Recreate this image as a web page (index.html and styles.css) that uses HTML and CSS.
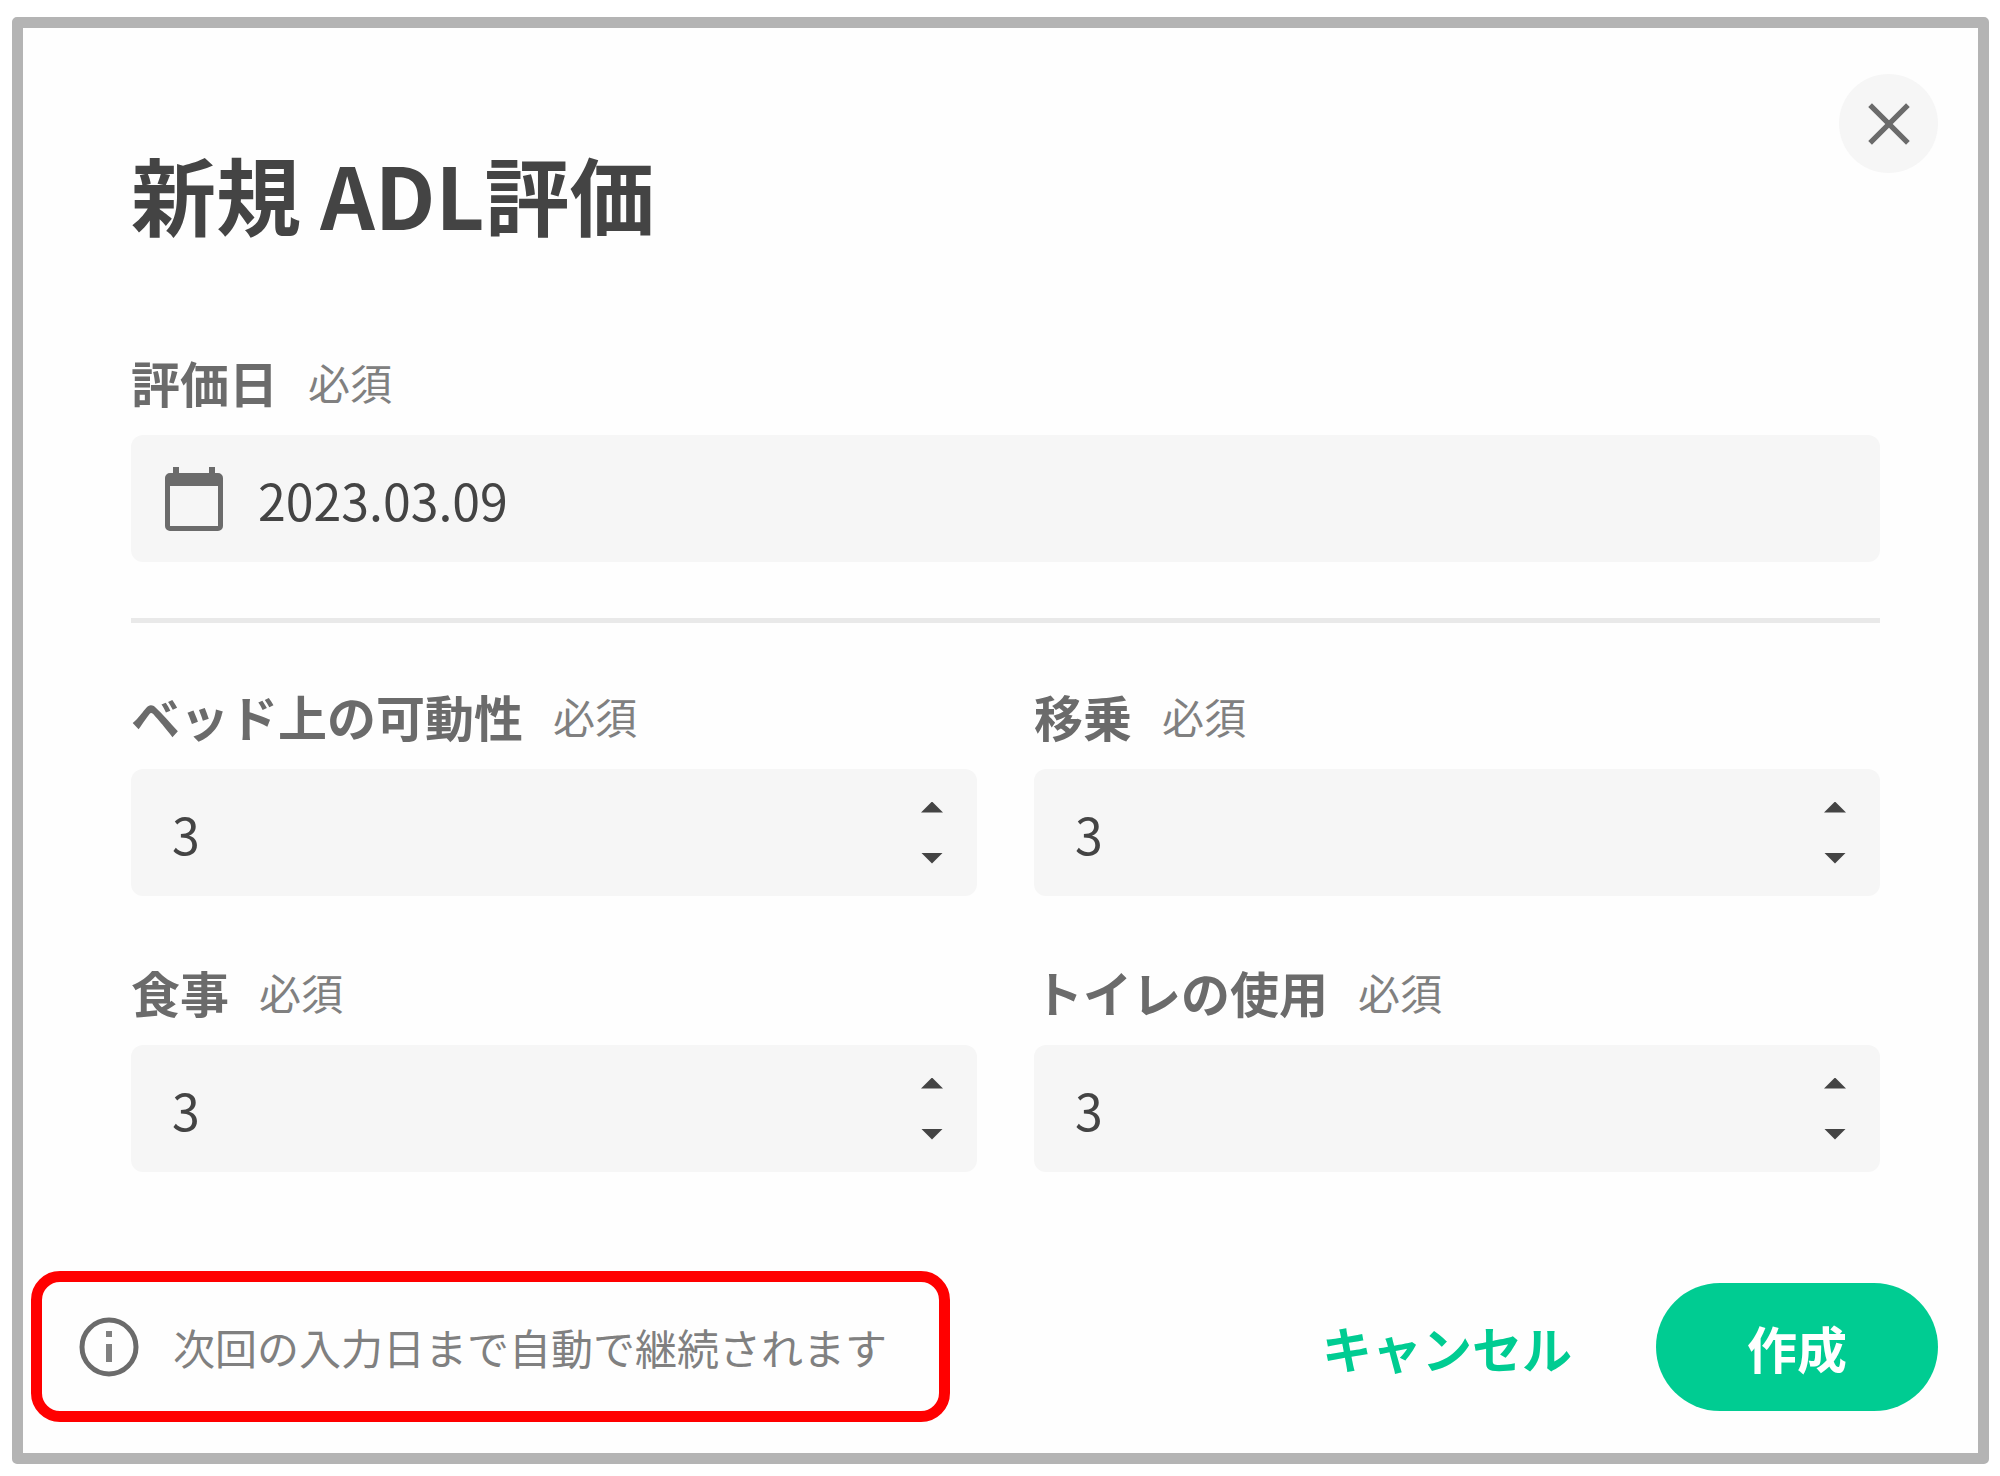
FILE: index.html
```html
<!DOCTYPE html>
<html lang="ja">
<head>
  <meta charset="UTF-8">
  <meta name="viewport" content="width=device-width, initial-scale=1.0">
  <title>新規 ADL評価</title>
  <link rel="stylesheet" href="styles.css">
</head>
<body>
<form class="dialog" onsubmit="return false">
  <button type="button" class="close-btn" aria-label="閉じる">
    <svg viewBox="0 0 40 40"><path d="M2 2 L38 38 M38 2 L2 38"/></svg>
  </button>

  <div class="content">
    <h1 class="title">新規 ADL評価</h1>

    <div class="field">
      <label class="field-label" for="date">評価日 <span class="required">必須</span></label>
      <div class="control date-control">
        <svg class="calendar-icon" viewBox="0 0 60 66">
          <path fill-rule="evenodd" d="M9 1h6v6h30V1h6v6h3a5 5 0 0 1 5 5v48a5 5 0 0 1-5 5H6a5 5 0 0 1-5-5V12a5 5 0 0 1 5-5h3zM6 20v40h48V20z"/>
        </svg>
        <input type="text" id="date" value="2023.03.09">
      </div>
    </div>

    <hr class="divider">

    <div class="grid">
      <div class="field">
        <label class="field-label" for="bed">ベッド上の可動性 <span class="required">必須</span></label>
        <div class="control">
          <input type="number" id="bed" value="3">
          <div class="spinner">
            <button type="button" class="up" aria-label="増やす"></button>
            <button type="button" class="down" aria-label="減らす"></button>
          </div>
        </div>
      </div>

      <div class="field">
        <label class="field-label" for="transfer">移乗 <span class="required">必須</span></label>
        <div class="control">
          <input type="number" id="transfer" value="3">
          <div class="spinner">
            <button type="button" class="up" aria-label="増やす"></button>
            <button type="button" class="down" aria-label="減らす"></button>
          </div>
        </div>
      </div>

      <div class="field">
        <label class="field-label" for="meal">食事 <span class="required">必須</span></label>
        <div class="control">
          <input type="number" id="meal" value="3">
          <div class="spinner">
            <button type="button" class="up" aria-label="増やす"></button>
            <button type="button" class="down" aria-label="減らす"></button>
          </div>
        </div>
      </div>

      <div class="field">
        <label class="field-label" for="toilet">トイレの使用 <span class="required">必須</span></label>
        <div class="control">
          <input type="number" id="toilet" value="3">
          <div class="spinner">
            <button type="button" class="up" aria-label="増やす"></button>
            <button type="button" class="down" aria-label="減らす"></button>
          </div>
        </div>
      </div>
    </div>
  </div>

  <div class="footer">
    <div class="notice">
      <svg class="info-icon" viewBox="0 0 60 60">
        <circle cx="30" cy="30" r="27"/>
        <path d="M27 14h6v6h-6zM27 27h6v18h-6z"/>
      </svg>
      <span>次回の入力日まで自動で継続されます</span>
    </div>
    <div class="actions">
      <button type="button" class="cancel-btn">キャンセル</button>
      <button type="submit" class="create-btn">作成</button>
    </div>
  </div>
</form>
</body>
</html>
```
FILE: styles.css
```css
* {
  box-sizing: border-box;
}

body {
  margin: 0;
  padding: 17px 11px 12px 12px;
  background: #fff;
  font-family: "Noto Sans CJK JP", sans-serif;
  color: #444;
}

input,
button {
  font-family: inherit;
  margin: 0;
  padding: 0;
  border: none;
  background: none;
}

button {
  cursor: pointer;
}

.dialog {
  position: relative;
  border: 11px solid #b4b4b4;
  border-radius: 5px;
  background: #fefefe;
}

/* Close button in the corner */
.close-btn {
  position: absolute;
  top: 46px;
  right: 40px;
  width: 99px;
  height: 99px;
  border-radius: 50%;
  background: #f6f6f6;
  display: flex;
  align-items: center;
  justify-content: center;
}

.close-btn svg {
  width: 42px;
  height: 42px;
  fill: none;
  stroke: #6b6b6b;
  stroke-width: 5;
}

.content {
  padding: 115px 98px 0 108px;
}

.title {
  margin: 0 0 109px;
  font-size: 85px;
  line-height: 100px;
  font-weight: 700;
}

/* Fields */
.field-label {
  display: flex;
  align-items: center;
  gap: 30px;
  margin-bottom: 23px;
  font-size: 49px;
  line-height: 60px;
  font-weight: 700;
  color: #6b6b6b;
}

.required {
  font-size: 42px;
  font-weight: 400;
  color: #808080;
}

.control {
  display: flex;
  align-items: center;
  height: 127px;
  padding: 0 34px 0 41px;
  border-radius: 12px;
  background: #f6f6f6;
}

.control input {
  flex: 1;
  min-width: 0;
  height: 100%;
  font-size: 50px;
  color: #444;
  outline: none;
}

.control input[type="number"] {
  appearance: textfield;
  -moz-appearance: textfield;
}

.control input::-webkit-inner-spin-button,
.control input::-webkit-outer-spin-button {
  -webkit-appearance: none;
  margin: 0;
}

.date-control {
  gap: 34px;
  padding-left: 33px;
}

.calendar-icon {
  width: 60px;
  height: 66px;
  fill: #6b6b6b;
}

.spinner {
  display: flex;
  flex-direction: column;
  gap: 40px;
}

.spinner button {
  width: 22px;
  height: 11px;
  background: #444;
}

.spinner .up {
  clip-path: polygon(50% 0, 100% 100%, 0 100%);
}

.spinner .down {
  clip-path: polygon(0 0, 100% 0, 50% 100%);
}

.divider {
  height: 5px;
  margin: 56px 0 63px;
  border: none;
  background: #e9e9e9;
}

.grid {
  display: grid;
  grid-template-columns: 1fr 1fr;
  gap: 66px 57px;
}

/* Footer */
.footer {
  display: flex;
  align-items: center;
  justify-content: space-between;
  padding: 99px 40px 31px 8px;
}

.notice {
  display: flex;
  align-items: center;
  gap: 34px;
  padding: 32px 52px 32px 37px;
  border: 11px solid #f00;
  border-radius: 29px;
  font-size: 42px;
  line-height: 65px;
  color: #808080;
}

.info-icon {
  width: 60px;
  height: 60px;
  fill: #808080;
}

.info-icon circle {
  fill: none;
  stroke: #6b6b6b;
  stroke-width: 5;
}

.actions {
  display: flex;
  align-items: center;
  gap: 84px;
}

.cancel-btn,
.create-btn {
  height: 128px;
  font-size: 50px;
  font-weight: 700;
}

.cancel-btn {
  color: #00cc92;
}

.create-btn {
  padding: 0 91px;
  border-radius: 64px;
  background: #00cc92;
  color: #fff;
}
```
